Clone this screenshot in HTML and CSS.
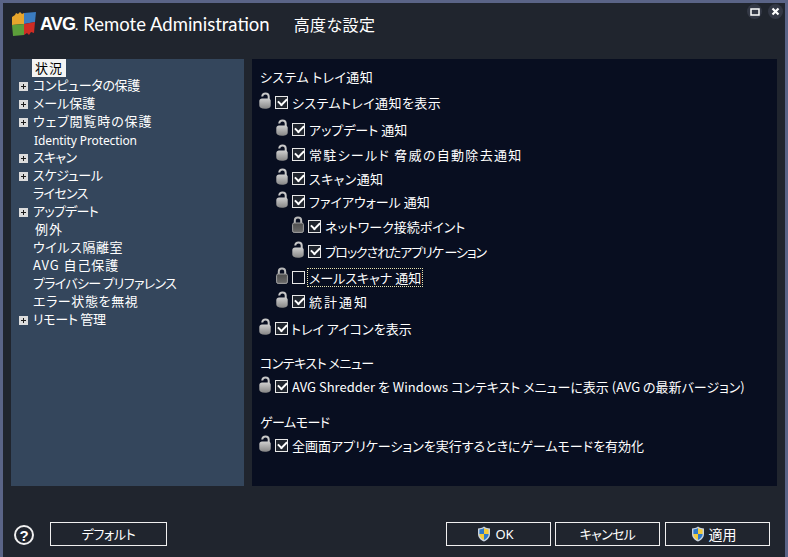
FILE: index.html
```html
<!DOCTYPE html>
<html lang="ja">
<head>
<meta charset="utf-8">
<title>AVG Remote Administration</title>
<link rel="stylesheet" href="styles.css">
</head>
<body>
<svg class="defs" width="0" height="0" aria-hidden="true">
  <defs>
    <linearGradient id="lockBody" x1="0" y1="0" x2="0" y2="1"><stop offset="0" stop-color="#cfcfcf"/><stop offset="1" stop-color="#868686"/></linearGradient>
    <linearGradient id="lockDark" x1="0" y1="0" x2="0" y2="1"><stop offset="0" stop-color="#4c4c4c"/><stop offset="1" stop-color="#6a6a6a"/></linearGradient>
    <symbol id="open" viewBox="0 0 12 17">
      <path d="M3.200 4.500C3.400 2.500 4.800 1.500 6.500 1.500S9.700 2.700 9.700 4.500V8" fill="none" stroke="#c8c8c8" stroke-width="2"/>
      <path d="M3 6.500H9.500C10.800 6.500 11.700 7.500 11.700 8.800V13.500C11.700 15.500 10 16.700 6 16.700S.3 15.500.3 13.500V9C.3 7.500 1.500 6.500 3 6.500Z" fill="url(#lockBody)"/>
    </symbol>
    <symbol id="closed" viewBox="0 0 12 17">
      <path d="M2.800 8V4.500C2.800 2.600 4.200 1.500 6 1.500S9.200 2.600 9.200 4.500V8" fill="none" stroke="#b8b8b8" stroke-width="2"/>
      <rect x="0.600" y="7" width="10.800" height="9.400" rx="1.500" fill="url(#lockDark)" stroke="#a0a0a0" stroke-width="1"/>
    </symbol>
    <symbol id="shield" viewBox="0 0 14 16">
      <path d="M7 .5C5 2 3 2.400 1 2.400V8c0 3.600 2.600 6 6 7.500 3.400-1.500 6-3.900 6-7.500V2.400C11 2.400 9 2 7 .5Z" fill="#c9d3de"/>
      <path d="M7 2C5.600 3 4 3.400 2.400 3.500V8H7Z" fill="#2f79c9"/>
      <path d="M7 2C8.400 3 10 3.400 11.600 3.500V8H7Z" fill="#f4cb3a"/>
      <path d="M2.400 8H7v6C4.400 12.800 2.400 10.800 2.400 8Z" fill="#f4cb3a"/>
      <path d="M11.600 8H7v6c2.600-1.200 4.600-3.200 4.600-6Z" fill="#2f79c9"/>
    </symbol>
  </defs>
</svg>
<div class="window">
  <header class="titlebar">
    <svg class="logo" viewBox="0 0 24 24" aria-hidden="true">
      <path d="M0 5 3 3 4 1 6 2 8 0 10 2 12 1V12L0 13Z" fill="#e7a52c"/>
      <path d="M12 1 24 0 23 10 12 12Z" fill="#3b7cc0"/>
      <path d="M0 13 12 12 12 23 1 24Z" fill="#5c9e3a"/>
      <path d="M12 12 23 10 22 21 19 20 17 23 15 21 12 23Z" fill="#cf2c24"/>
    </svg>
    <span class="brand">AVG<span class="dot">.</span></span>
    <span class="product">Remote Administration</span>
    <span class="page-title">高度な設定</span>
    <div class="win-controls">
      <span class="win-btn"><svg viewBox="0 0 10 8" width="10" height="8"><rect x="1" y="1" width="8" height="6" fill="none" stroke="#fff" stroke-width="1.500"/></svg></span>
      <span class="win-btn"><svg viewBox="0 0 9 9" width="9" height="9"><path d="M1.500 1.500 7.500 7.500M7.500 1.500 1.500 7.500" stroke="#fff" stroke-width="2.200"/></svg></span>
    </div>
  </header>
  <main class="panels">
    <nav class="tree">
      <div class="node"><span class="noexp"></span><span class="selected">状況</span></div>
      <div class="node"><span class="exp"></span><span class="label ls-n3">コンピュータの保護</span></div>
      <div class="node"><span class="exp"></span><span class="label">メール保護</span></div>
      <div class="node"><span class="exp"></span><span class="label ls-p8">ウェブ閲覧時の保護</span></div>
      <div class="node"><span class="noexp"></span><span class="latin">Identity Protection</span></div>
      <div class="node"><span class="exp"></span><span class="label ls-n7">スキャン</span></div>
      <div class="node"><span class="exp"></span><span class="label ls-n3">スケジュール</span></div>
      <div class="node"><span class="noexp"></span><span class="label ls-n7">ライセンス</span></div>
      <div class="node"><span class="exp"></span><span class="label ls-n7">アップデート</span></div>
      <div class="node"><span class="noexp"></span><span class="label ls-p8 kanji">例外</span></div>
      <div class="node"><span class="noexp"></span><span class="label ls-p5">ウイルス隔離室</span></div>
      <div class="node"><span class="noexp"></span><span class="label ls-p8">AVG 自己保護</span></div>
      <div class="node"><span class="noexp"></span><span class="label ls-n7">プライバシー プリファレンス</span></div>
      <div class="node"><span class="noexp"></span><span class="label ls-p5">エラー状態を無視</span></div>
      <div class="node"><span class="exp"></span><span class="label ls-n3">リモート 管理</span></div>
    </nav>
    <section class="settings">
      <h2 class="heading ls-p3">システム トレイ通知</h2>
      <div class="row m4"><svg class="lock"><use href="#open"/></svg><span class="cb on"></span><span class="ls-p3">システムトレイ通知を表示</span></div>
      <div class="row m5 lvl1"><svg class="lock"><use href="#open"/></svg><span class="cb on"></span><span>アップデート 通知</span></div>
      <div class="row m3 lvl1"><svg class="lock"><use href="#open"/></svg><span class="cb on"></span><span class="ls-p12">常駐シールド 脅威の自動除去通知</span></div>
      <div class="row m2 lvl1"><svg class="lock"><use href="#open"/></svg><span class="cb on"></span><span class="ls-p3">スキャン通知</span></div>
      <div class="row m1 lvl1"><svg class="lock"><use href="#open"/></svg><span class="cb on"></span><span>ファイアウォール 通知</span></div>
      <div class="row m3 lvl2"><svg class="lock"><use href="#closed"/></svg><span class="cb on"></span><span>ネットワーク接続ポイント</span></div>
      <div class="row m3 lvl2"><svg class="lock"><use href="#open"/></svg><span class="cb on"></span><span class="ls-n11">ブロックされたアプリケ ーション</span></div>
      <div class="row m4 lvl1"><svg class="lock"><use href="#closed"/></svg><span class="cb"></span><span class="focus">メールスキャナ 通知</span></div>
      <div class="row m2 lvl1"><svg class="lock"><use href="#open"/></svg><span class="cb on"></span><span class="ls-p20">統計通知</span></div>
      <div class="row m5"><svg class="lock"><use href="#open"/></svg><span class="cb on tray"></span><span>トレイ アイコンを表示</span></div>
      <h2 class="heading gap1 ls-n5">コンテキスト メニュー</h2>
      <div class="row m2"><svg class="lock"><use href="#open"/></svg><span class="cb on"></span><span>AVG Shredder を Windows コンテキスト メニューに表示 (AVG の最新バージョン)</span></div>
      <h2 class="heading gap2 ls-n5">ゲームモード</h2>
      <div class="row m2"><svg class="lock"><use href="#open"/></svg><span class="cb on"></span><span>全画面アプリケーションを実行するときにゲームモードを有効化</span></div>
    </section>
  </main>
  <footer class="actions">
    <span class="help">?</span>
    <button class="btn default ls-n3">デフォルト</button>
    <span class="spacer"></span>
    <button class="btn main shielded"><svg class="shield"><use href="#shield"/></svg><span class="ok">OK</span></button>
    <button class="btn main ls-n7">キャンセル</button>
    <button class="btn main shielded apply"><svg class="shield"><use href="#shield"/></svg>適用</button>
  </footer>
</div>
</body>
</html>
```
FILE: styles.css
```css
* { box-sizing: border-box; }
html, body { margin: 0; padding: 0; }
body {
  width: 788px;
  height: 557px;
  overflow: hidden;
  background: #5a6487;
  font-family: "Noto Sans CJK JP", "Noto Sans", sans-serif;
  font-size: 13px;
  color: #fff;
  font-feature-settings: "palt";
}
.defs { position: absolute; }
.window {
  width: 782px;
  height: 554px;
  margin: 3px 3px 0;
  background: #20252e;
  display: flex;
  flex-direction: column;
}
.titlebar {
  height: 56px;
  display: flex;
  align-items: flex-start;
  padding: 9px 0 0 9px;
  flex: none;
}
.logo { width: 24px; height: 24px; flex: none; }
.brand {
  margin-left: 4px;
  font-family: "Liberation Sans", sans-serif;
  font-weight: 700;
  font-size: 18px;
  line-height: 24px;
  letter-spacing: -0.8px;
}
.dot { font-size: 10px; }
.product {
  margin-left: 6px;
  font-family: "Lato", sans-serif;
  font-size: 18.500px;
  line-height: 24px;
}
.page-title {
  margin-left: 24px;
  font-size: 16px;
  line-height: 24px;
  letter-spacing: .4px;
}
.win-controls {
  margin-left: auto;
  margin-right: 2px;
  margin-top: -8px;
  display: flex;
  gap: 6px;
}
.win-btn {
  width: 15px;
  height: 15px;
  border-radius: 50%;
  background: #333845;
  display: flex;
  align-items: center;
  justify-content: center;
}
.panels {
  height: 427px;
  flex: none;
  display: flex;
  gap: 8px;
  padding: 0 8px;
}
.tree {
  width: 233px;
  background: #34465c;
}
.node {
  height: 18px;
  display: flex;
  align-items: center;
  padding-left: 8px;
  line-height: 18px;
}
.exp, .noexp { width: 9px; height: 9px; flex: none; margin-right: 4px; }
.exp {
  background:
    linear-gradient(#1c1c1c, #1c1c1c) center / 5px 1px no-repeat,
    linear-gradient(#1c1c1c, #1c1c1c) center / 1px 5px no-repeat,
    #dcdcdc;
}
.label { padding: 0 1px 2px; line-height: 16px; white-space: nowrap; }
.kanji { padding-left: 3px; }
.latin {
  font-family: "Noto Sans", sans-serif;
  font-size: 12px;
  line-height: 17px;
  letter-spacing: -0.1px;
  padding: 1px 0 0 2px;
  white-space: nowrap;
}
.selected {
  padding: 0 3px;
  background: #f4f4f4;
  color: #000;
  font-size: 13px;
  line-height: 18px;
  letter-spacing: 1px;
}
.settings {
  flex: 1;
  background: #080e20;
  padding: 8px 0 0 7px;
}
.heading {
  margin: 0;
  padding-left: 1px;
  font-weight: 400;
  font-size: 13px;
  line-height: 20px;
  white-space: nowrap;
}
.gap1 { margin-top: 14px; }
.gap2 { margin-top: 15px; }
.row { display: flex; align-items: center; white-space: nowrap; height: 22px; }
.m1 { margin-top: 1px; }
.m2 { margin-top: 2px; }
.m3 { margin-top: 3px; }
.m4 { margin-top: 4px; }
.m5 { margin-top: 5px; }
.lvl1 { padding-left: 17px; }
.lvl2 { padding-left: 33px; }
.lock { width: 12px; height: 17px; margin-top: -4px; flex: none; }
.cb {
  width: 13px;
  height: 13px;
  flex: none;
  margin: 0 4px 0 4px;
  border: 1px solid #e8e8e8;
  position: relative;
  background: #0a1022;
}
.cb.on { background: #20252e; }
.cb.on::after {
  content: "";
  position: absolute;
  left: 2px;
  top: 1px;
  width: 7px;
  height: 4px;
  border-left: 2px solid #fff;
  border-bottom: 2px solid #fff;
  transform: rotate(-45deg);
}
.tray { margin-right: 3px; }
.focus {
  outline: 1px dotted #e8e4b0;
  outline-offset: 0;
  padding: 0 1px;
  margin-left: -1px;
  line-height: 17px;
}
.ls-n11 { letter-spacing: -1.1px; }
.ls-n7 { letter-spacing: -0.7px; }
.ls-n5 { letter-spacing: -0.5px; }
.ls-n3 { letter-spacing: -0.3px; }
.ls-p3 { letter-spacing: 0.4px; }
.ls-p5 { letter-spacing: 0.6px; }
.ls-p8 { letter-spacing: 0.9px; }
.ls-p12 { letter-spacing: 1.3px; }
.ls-p20 { letter-spacing: 2px; }
.actions {
  flex: 1;
  display: flex;
  align-items: flex-start;
  padding: 36px 0 0 11px;
}
.help {
  width: 20px;
  height: 20px;
  margin-top: 3px;
  border: 2px solid #f0f0f0;
  border-radius: 50%;
  display: flex;
  align-items: center;
  justify-content: center;
  font-family: "Liberation Sans", sans-serif;
  font-weight: 700;
  font-size: 15px;
  flex: none;
}
.btn {
  height: 24px;
  background: #20252e;
  border: 1px solid #f0f0f0;
  color: #fff;
  font: inherit;
  padding: 0 0 2px;
  display: flex;
  align-items: center;
  justify-content: center;
  flex: none;
}
.default { width: 117px; margin-left: 16px; }
.spacer { flex: 1; }
.main { width: 105px; margin-left: 4px; }
.main:last-child { margin-right: 15px; margin-left: 5px; }
.shielded { padding-right: 6px; padding-bottom: 0; }
.apply { padding-right: 8px; font-size: 14px; }
.shield { width: 14px; height: 16px; margin-right: 4px; flex: none; }
.ok { font-family: "Noto Sans", sans-serif; font-size: 13px; }
```
